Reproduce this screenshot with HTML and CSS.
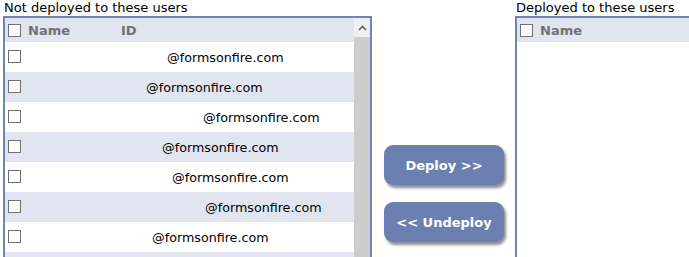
FILE: index.html
```html
<!DOCTYPE html>
<html lang="en">
<head>
    <meta charset="UTF-8">
    <title>Deploy form</title>
    <link rel="stylesheet" href="styles.css">
</head>
<body>
    <div class="page">
        <div class="panel panel-left">
            <div class="caption">Not deployed to these users</div>
            <div class="box">
                <div class="list">
                    <div class="head">
                        <input type="checkbox" class="check">
                        <span class="col-name">Name</span>
                        <span class="col-id">ID</span>
                    </div>
                    <div class="row"><input type="checkbox" class="check"><span class="name" style="width:139px"></span><span class="email">@formsonfire.com</span></div>
                    <div class="row"><input type="checkbox" class="check"><span class="name" style="width:118px"></span><span class="email">@formsonfire.com</span></div>
                    <div class="row"><input type="checkbox" class="check"><span class="name" style="width:175px"></span><span class="email">@formsonfire.com</span></div>
                    <div class="row"><input type="checkbox" class="check"><span class="name" style="width:134px"></span><span class="email">@formsonfire.com</span></div>
                    <div class="row"><input type="checkbox" class="check"><span class="name" style="width:144px"></span><span class="email">@formsonfire.com</span></div>
                    <div class="row"><input type="checkbox" class="check"><span class="name" style="width:177px"></span><span class="email">@formsonfire.com</span></div>
                    <div class="row"><input type="checkbox" class="check"><span class="name" style="width:124px"></span><span class="email">@formsonfire.com</span></div>
                    <div class="row"><input type="checkbox" class="check"></div>
                </div>
                <div class="scrollbar">
                    <div class="arrow">
                        <svg width="9" height="6" viewBox="0 0 9 6"><path d="M1 5 L4.5 1.5 L8 5" fill="none" stroke="#606060" stroke-width="1.6"/></svg>
                    </div>
                    <div class="thumb"></div>
                </div>
            </div>
        </div>

        <div class="actions">
            <button class="btn">Deploy &gt;&gt;</button>
            <button class="btn">&lt;&lt; Undeploy</button>
        </div>

        <div class="panel panel-right">
            <div class="caption">Deployed to these users</div>
            <div class="box">
                <div class="list">
                    <div class="head">
                        <input type="checkbox" class="check">
                        <span class="col-name">Name</span>
                    </div>
                </div>
            </div>
        </div>
    </div>
</body>
</html>
```

FILE: styles.css
```css
body {
    margin: 0;
    font-family: "DejaVu Sans", Verdana, sans-serif;
    font-size: 13px;
    color: #000;
    background: #fff;
    height: 257px;
    overflow: hidden;
}
.page {
    display: flex;
    align-items: flex-start;
}
.panel {
    flex: none;
}
.panel-left {
    width: 369px;
    margin-left: 3px;
}
.panel-right {
    margin-left: 11px;
    width: 200px;
}
.caption {
    height: 16px;
    line-height: 16px;
    padding-left: 1px;
    white-space: nowrap;
}
.box {
    display: flex;
    border: 2px solid #7083b5;
    height: 300px;
}
.list {
    flex: 1;
}
.head {
    display: flex;
    align-items: center;
    height: 24px;
    background: #e1e5f0;
    color: #727272;
    font-weight: bold;
}
.col-name {
    width: 93px;
}
.row {
    display: flex;
    align-items: center;
    height: 30px;
    font-size: 12.7px;
}
.row:nth-child(odd) {
    background: #e1e5f0;
}
.row .check {
    align-self: flex-start;
    margin-top: 8px;
}
.name {
    display: inline-block;
    height: 1px;
}
.check {
    appearance: none;
    -webkit-appearance: none;
    width: 13px;
    height: 13px;
    margin: 0 7px 0 3px;
    border: 1px solid #707070;
    background: #fff;
    flex: none;
}
.scrollbar {
    width: 16px;
    display: flex;
    flex-direction: column;
    background: #f0f0f0;
}
.arrow {
    height: 19px;
    display: flex;
    align-items: center;
    justify-content: center;
}
.thumb {
    flex: 1;
    background: #cdcdcd;
}
.actions {
    flex: none;
    display: flex;
    flex-direction: column;
    gap: 17px;
    margin-left: 12px;
    padding-top: 145px;
}
.btn {
    width: 120px;
    height: 40px;
    border: none;
    border-radius: 9px;
    background: #6c7fb1;
    color: #fff;
    font-family: "DejaVu Sans", Verdana, sans-serif;
    font-size: 13px;
    font-weight: bold;
    box-shadow: 2px 3px 3px rgba(0, 0, 0, 0.45);
    cursor: pointer;
}
```
